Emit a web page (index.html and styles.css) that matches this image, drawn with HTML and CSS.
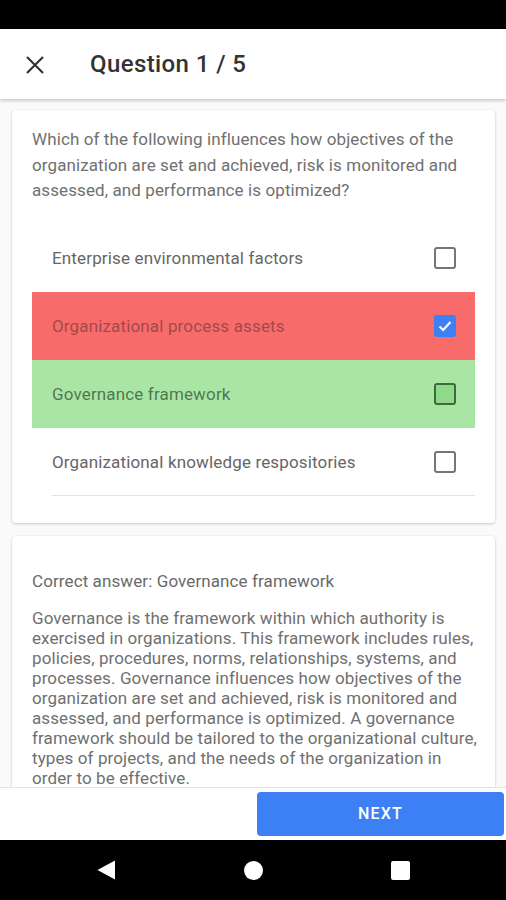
FILE: index.html
```html
<!DOCTYPE html>
<html lang="en">
<head>
    <meta charset="UTF-8">
    <meta name="viewport" content="width=device-width, initial-scale=1.0">
    <title>Question 1 / 5</title>
    <link rel="stylesheet" href="styles.css">
</head>
<body>
    <div class="screen">
        <!-- Status bar -->
        <div class="status-bar"></div>

        <!-- App bar -->
        <header class="app-bar">
            <button class="close-btn" aria-label="Close">
                <svg width="18" height="18" viewBox="0 0 18 18">
                    <path d="M1 1 L17 17 M17 1 L1 17" stroke="#333" stroke-width="2.2" fill="none"/>
                </svg>
            </button>
            <h1 class="title">Question 1 / 5</h1>
        </header>

        <!-- Scrolling content -->
        <main class="content">
            <section class="card question-card">
                <p class="question-text">Which of the following influences how objectives of the organization are set and achieved, risk is monitored and assessed, and performance is optimized?</p>

                <ul class="options">
                    <li class="option">
                        <span class="option-label">Enterprise environmental factors</span>
                        <span class="checkbox"></span>
                    </li>
                    <li class="option option-wrong">
                        <span class="option-label">Organizational process assets</span>
                        <span class="checkbox checkbox-checked">
                            <svg width="16" height="16" viewBox="0 0 16 16">
                                <path d="M2.5 8.5 L6.2 12 L13.5 4" stroke="#fff" stroke-width="2.2" fill="none"/>
                            </svg>
                        </span>
                    </li>
                    <li class="option option-correct">
                        <span class="option-label">Governance framework</span>
                        <span class="checkbox checkbox-green"></span>
                    </li>
                    <li class="option option-last">
                        <span class="option-label">Organizational knowledge respositories</span>
                        <span class="checkbox"></span>
                    </li>
                </ul>
            </section>

            <section class="card answer-card">
                <p class="correct-answer">Correct answer: Governance framework</p>
                <p class="explanation">Governance is the framework within which authority is exercised in organizations. This framework includes rules, policies, procedures, norms, relationships, systems, and processes. Governance influences how objectives of the organization are set and achieved, risk is monitored and assessed, and performance is optimized. A governance framework should be tailored to the organizational culture, types of projects, and the needs of the organization in order to be effective.</p>
            </section>
        </main>

        <!-- Bottom action bar -->
        <footer class="bottom-bar">
            <button class="next-btn">NEXT</button>
        </footer>

        <!-- Navigation bar -->
        <nav class="nav-bar">
            <svg width="19" height="20" viewBox="0 0 19 20">
                <path d="M18 0.5 L18 19.5 L0.5 10 Z" fill="#fff"/>
            </svg>
            <span class="nav-home"></span>
            <span class="nav-recent"></span>
        </nav>
    </div>
</body>
</html>
```

FILE: styles.css
```css
* {
    margin: 0;
    padding: 0;
    box-sizing: border-box;
}

body {
    font-family: Roboto, "Noto Sans", Arial, sans-serif;
    background-color: #fafafa;
    overflow: hidden;
}

.screen {
    width: 506px;
    height: 900px;
    display: flex;
    flex-direction: column;
}

.status-bar {
    height: 29px;
    background: #000;
    flex-shrink: 0;
}

.app-bar {
    height: 70px;
    flex-shrink: 0;
    background: #fff;
    display: flex;
    align-items: center;
    padding-left: 26px;
    box-shadow: 0 2px 3px rgba(0, 0, 0, 0.18);
    position: relative;
    z-index: 2;
}

.close-btn {
    background: none;
    border: none;
    width: 18px;
    height: 18px;
    display: flex;
    margin-top: 1px;
}

.title {
    font-size: 24px;
    font-weight: 500;
    color: #333;
    margin-left: 46px;
    letter-spacing: 0.4px;
}

.content {
    flex: 1;
    overflow: hidden;
    padding: 11px 11px 0 12px;
    display: flex;
    flex-direction: column;
    gap: 13px;
}

.card {
    background: #fff;
    border-radius: 4px;
    box-shadow: 0 1px 3px rgba(0, 0, 0, 0.2), 0 0 1px rgba(0, 0, 0, 0.08);
    flex-shrink: 0;
}

.question-card {
    padding: 17px 20px 27px 20px;
}

.question-text {
    font-size: 17px;
    line-height: 25.5px;
    color: #707070;
    letter-spacing: 0.1px;
    margin-bottom: 20px;
}

.options {
    list-style: none;
}

.option {
    height: 68px;
    display: flex;
    align-items: center;
    justify-content: space-between;
    padding: 0 19px 0 20px;
    font-size: 17px;
    letter-spacing: 0.15px;
    color: #666;
}

.option-wrong {
    background: #f86b6b;
    color: rgba(100, 50, 50, 0.6);
}

.option-correct {
    background: #a9e6a5;
    color: rgba(50, 80, 50, 0.75);
}

.option-last {
    position: relative;
}

.option-last::after {
    content: "";
    position: absolute;
    left: 20px;
    right: 0;
    bottom: 0;
    height: 1px;
    background: #e2e2e2;
}

.checkbox {
    width: 22px;
    height: 22px;
    border: 2px solid #767676;
    border-radius: 3px;
    display: flex;
    align-items: center;
    justify-content: center;
}

.checkbox-checked {
    background: #3d7ff5;
    border-color: #3d7ff5;
}

.checkbox-green {
    background: #8fd98b;
    border-color: #3e6a3c;
}

.answer-card {
    padding: 35px 14px 20px 20px;
}

.correct-answer {
    font-size: 17px;
    line-height: 20px;
    color: #6a6a6a;
    letter-spacing: 0.1px;
    margin-bottom: 17px;
}

.explanation {
    font-size: 17px;
    line-height: 20px;
    color: #707070;
    letter-spacing: 0.1px;
}

.bottom-bar {
    height: 53px;
    flex-shrink: 0;
    background: #fff;
    border-top: 1px solid #e4e4e4;
    display: flex;
    justify-content: flex-end;
    align-items: center;
    padding-right: 2px;
}

.next-btn {
    width: 247px;
    height: 44px;
    background: #3d7ff5;
    border: none;
    border-radius: 4px;
    color: #fff;
    font-family: Roboto, Arial, sans-serif;
    font-size: 16px;
    font-weight: 500;
    letter-spacing: 1.2px;
    margin-top: -1px;
}

.nav-bar {
    height: 60px;
    flex-shrink: 0;
    background: #000;
    display: flex;
    align-items: center;
    justify-content: center;
    gap: 128px;
}

.nav-home {
    width: 19px;
    height: 19px;
    border-radius: 50%;
    background: #fff;
}

.nav-recent {
    width: 19px;
    height: 19px;
    border-radius: 2px;
    background: #fff;
}
```
